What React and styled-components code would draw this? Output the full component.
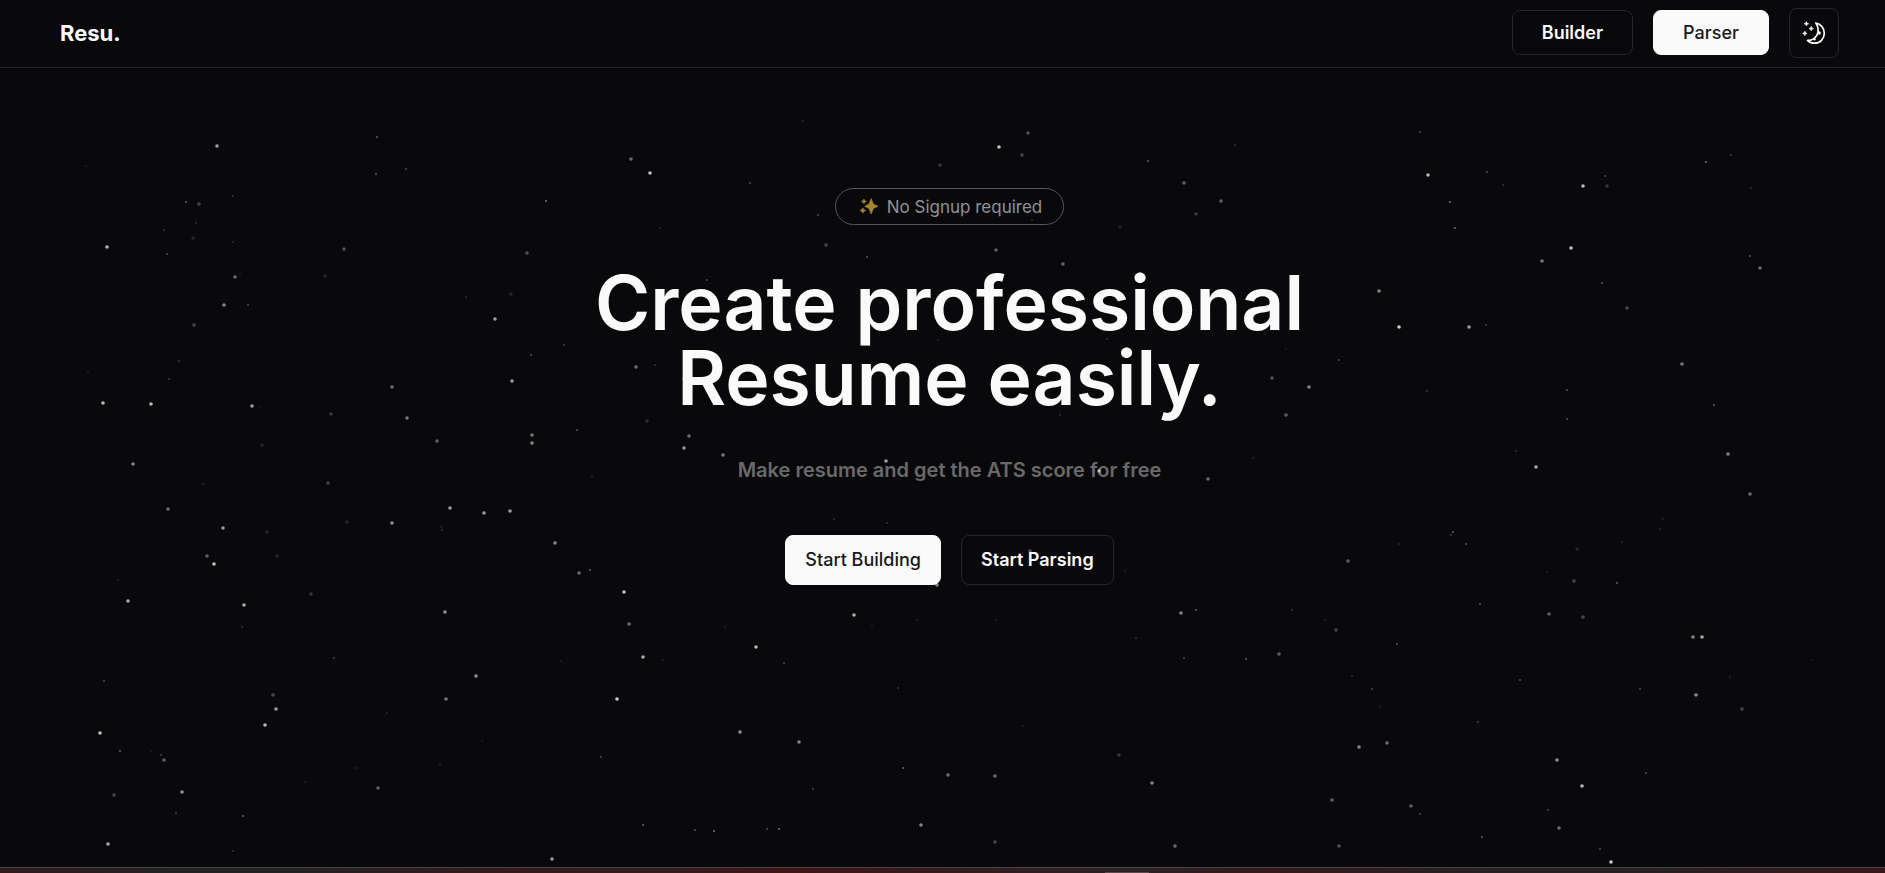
import React from "react";
import styled, { createGlobalStyle } from "styled-components";

const GlobalStyle = createGlobalStyle`
  *, *::before, *::after { box-sizing: border-box; }
  body {
    margin: 0;
    background: #09090b;
    color: #fafafa;
    font-family: Inter, "Liberation Sans", sans-serif;
  }
`;

const Page = styled.div`
  position: relative;
  display: flex;
  flex-direction: column;
  min-height: 100vh;
`;

const Sky = styled.svg`
  position: absolute;
  inset: 0;
  width: 100%;
  height: 100%;
  pointer-events: none;
  fill: #fff;
`;

const Header = styled.header`
  display: flex;
  align-items: center;
  justify-content: space-between;
  height: 68px;
  padding: 0 46px 2px 60px;
  border-bottom: 1px solid #222225;
`;

const Logo = styled.a`
  color: #fafafa;
  font-size: 22px;
  font-weight: 700;
  line-height: 28px;
  text-decoration: none;
`;

const Nav = styled.nav`
  display: flex;
  align-items: center;
  gap: 20px;
`;

const Button = styled.button`
  display: inline-flex;
  align-items: center;
  justify-content: center;
  height: ${(p) => (p.$large ? 50 : 45)}px;
  padding: 0 ${(p) => (p.$large ? 19 : 29)}px;
  border: 1px solid ${(p) => (p.$solid ? "#fafafa" : "#27272a")};
  border-radius: 8px;
  background: ${(p) => (p.$solid ? "#fafafa" : "#09090b")};
  color: ${(p) => (p.$solid ? "#18181b" : "#fafafa")};
  font-family: inherit;
  font-size: 18px;
  font-weight: ${(p) => (p.$solid ? 500 : 600)};
  line-height: 24px;
  white-space: nowrap;
  cursor: pointer;
`;

const IconButton = styled(Button)`
  width: 50px;
  height: 50px;
  padding: 0;
`;

const Hero = styled.main`
  display: flex;
  flex: 1;
  flex-direction: column;
  align-items: center;
  padding: 120px 0 60px 14px;
  text-align: center;
`;

const Pill = styled.div`
  display: flex;
  align-items: center;
  gap: 8px;
  height: 37px;
  padding: 0 21px 0 24px;
  border: 1px solid #57575a;
  border-radius: 20px;
  color: #929298;
  font-size: 17px;
  line-height: 24px;
`;

const Title = styled.h1`
  margin: 40px 0 0;
  font-size: 75px;
  font-weight: 600;
  line-height: 75px;
`;

const Subtitle = styled.p`
  margin: 40px 0 0;
  color: #69696b;
  font-size: 20px;
  font-weight: 600;
  line-height: 30px;
`;

const Actions = styled.div`
  display: flex;
  gap: 20px;
  margin-top: 50px;
`;

const Preview = styled.section`
  display: flex;
  align-items: flex-end;
  height: 6px;
  padding-left: 58.6%;
  border-top: 1px solid #464648;
  background: linear-gradient(
    90deg,
    #2f191b 0%, #232122 9%, #252122 17%, #35191b 27%, #331c1e 35%,
    #3f1415 42%, #331b1d 51%, #2a2223 60%, #35181a 67%, #252122 79%,
    #252122 86%, #371719 100%
  );
`;

const PreviewTab = styled.span`
  width: 44px;
  height: 1px;
  background: #5a4a4b;
`;

const STAR_RADIUS = { big: 1.8, small: 0.9 };

// Each star is [x, y, opacity in percent].
const BIG_STARS = [
  [217, 146, 60], [199, 204, 25], [193, 238, 12], [107, 247, 70], [344, 249, 30], [527, 253, 30],
  [235, 277, 40], [325, 276, 12], [224, 305, 50], [194, 325, 25], [103, 403, 70], [151, 404, 70],
  [252, 406, 60], [331, 414, 20], [262, 445, 12], [392, 387, 40], [407, 418, 45], [437, 441, 35],
  [133, 464, 50], [168, 509, 40], [328, 483, 25], [223, 528, 60], [267, 532, 12], [347, 522, 12],
  [392, 523, 55], [277, 556, 12], [207, 556, 35], [214, 564, 75], [511, 294, 12], [495, 319, 60],
  [512, 381, 60], [532, 435, 45], [532, 443, 50], [450, 508, 60], [484, 513, 60], [510, 511, 60],
  [555, 543, 50], [579, 573, 40], [128, 601, 65], [244, 605, 65], [311, 594, 20], [273, 695, 25],
  [276, 709, 60], [265, 725, 70], [100, 733, 75], [164, 760, 35], [114, 795, 25], [182, 792, 55],
  [108, 844, 65], [445, 612, 55], [476, 676, 55], [446, 699, 45], [378, 788, 35], [617, 699, 80],
  [624, 592, 75], [629, 624, 40], [552, 859, 60], [643, 657, 65], [756, 647, 70], [854, 615, 65],
  [740, 732, 55], [799, 742, 50], [948, 775, 40], [995, 776, 40], [921, 825, 50], [995, 842, 25],
  [1119, 755, 20], [1152, 783, 50], [1175, 846, 40], [1181, 613, 50], [937, 585, 50],
  [1336, 630, 25], [1279, 654, 35], [1549, 614, 35], [1583, 617, 25], [1574, 581, 25],
  [1693, 637, 50], [1702, 637, 65], [1696, 695, 55], [1742, 709, 25], [1359, 747, 50],
  [1387, 743, 40], [1557, 760, 55], [1582, 786, 70], [1332, 800, 35], [1411, 806, 35],
  [1559, 828, 40], [1339, 846, 30], [1611, 862, 80], [1379, 291, 50], [1627, 308, 25],
  [1399, 327, 80], [1469, 327, 60], [1272, 378, 30], [1309, 387, 50], [1286, 415, 35],
  [1682, 364, 45], [1536, 467, 65], [1728, 454, 50], [1750, 494, 40], [1577, 549, 12],
  [1348, 561, 35], [1428, 175, 70], [1583, 186, 70], [1607, 186, 20], [1571, 248, 75],
  [1542, 261, 45], [1760, 268, 40], [826, 245, 25], [996, 250, 35], [1063, 264, 40],
  [636, 367, 40], [647, 421, 15], [684, 379, 50], [723, 455, 45], [886, 461, 60], [1099, 471, 60],
  [1030, 551, 30], [631, 159, 40], [650, 173, 75], [999, 147, 75], [1022, 155, 25],
  [1028, 133, 30], [940, 165, 20], [1120, 227, 12], [1184, 183, 35], [1221, 201, 35],
  [1196, 214, 20], [689, 436, 40], [684, 448, 60], [1208, 479, 40],
];

const SMALL_STARS = [
  [377, 137, 40], [376, 174, 40], [406, 169, 30], [233, 196, 20], [186, 202, 40], [196, 223, 20],
  [164, 230, 20], [233, 242, 20], [167, 254, 30], [546, 201, 50], [86, 166, 10], [240, 274, 10],
  [248, 305, 30], [179, 361, 25], [169, 379, 25], [88, 372, 10], [260, 407, 10], [203, 484, 20],
  [466, 297, 15], [564, 345, 25], [531, 355, 35], [577, 430, 35], [592, 477, 15], [441, 527, 15],
  [442, 530, 20], [590, 570, 40], [118, 580, 15], [242, 627, 20], [334, 658, 30], [104, 681, 35],
  [120, 751, 40], [151, 751, 10], [161, 755, 25], [176, 813, 25], [243, 816, 45], [233, 851, 20],
  [387, 713, 12], [482, 741, 10], [440, 765, 15], [355, 768, 12], [305, 782, 12], [561, 661, 12],
  [601, 757, 30], [663, 660, 15], [784, 663, 30], [725, 627, 12], [872, 626, 10], [917, 620, 15],
  [996, 620, 12], [898, 688, 20], [903, 768, 40], [813, 789, 30], [643, 825, 40], [695, 830, 35],
  [714, 831, 50], [767, 829, 30], [779, 829, 50], [1023, 726, 10], [1196, 610, 40],
  [1136, 638, 20], [1184, 658, 30], [1246, 659, 40], [1292, 610, 20], [1325, 620, 12],
  [1397, 644, 35], [1480, 604, 35], [1617, 583, 40], [1352, 676, 20], [1372, 689, 30],
  [1380, 707, 15], [1520, 680, 35], [1640, 689, 30], [1730, 677, 15], [1812, 660, 10],
  [1478, 722, 30], [1646, 773, 30], [1420, 814, 30], [1548, 810, 30], [1482, 837, 40],
  [1600, 849, 35], [1486, 325, 25], [1286, 349, 10], [1339, 360, 30], [1427, 391, 25],
  [1567, 390, 35], [1567, 419, 35], [1714, 405, 40], [1516, 451, 20], [1663, 519, 15],
  [1660, 529, 15], [1622, 542, 15], [1453, 532, 40], [1451, 535, 25], [1466, 544, 35],
  [1399, 544, 15], [1547, 572, 10], [1420, 132, 30], [1487, 172, 30], [1503, 185, 20],
  [1450, 202, 45], [1455, 228, 45], [1605, 176, 30], [1706, 162, 45], [1731, 155, 25],
  [1751, 188, 20], [1602, 283, 35], [1750, 256, 35], [867, 257, 35], [707, 280, 30],
  [655, 365, 20], [938, 340, 15], [1107, 339, 20], [1060, 415, 20], [834, 519, 20],
  [887, 523, 20], [1125, 571, 12], [750, 183, 30], [818, 215, 30], [803, 121, 15],
  [660, 228, 15], [1148, 161, 40], [1235, 145, 20], [1253, 458, 15], [1032, 220, 20],
];

function Stars({ stars, size }) {
  return stars.map(([x, y, opacity]) => (
    <circle
      key={`${x}-${y}`}
      cx={x}
      cy={y}
      r={STAR_RADIUS[size]}
      opacity={opacity / 100}
    />
  ));
}

function MoonIcon() {
  return (
    <svg width="24" height="24" viewBox="0 0 24 24" fill="none" aria-hidden="true">
      <path
        d="M13.800 2C19 3 22.300 7.200 22.300 12.200c0 5.600-4.300 10-9.600 10-2.900 0-5.500-.9-7.200-2.800C10.500 19.600 15 16.500 15.900 11.500 16.500 8 15.700 4.700 13.800 2Z"
        stroke="#fafafa"
        strokeWidth="1.700"
        strokeLinejoin="round"
      />
      <circle cx="17.200" cy="12" r="1.700" fill="#fafafa" />
      <circle cx="12.500" cy="18.200" r="1.200" fill="#fafafa" />
      <path
        d="M4.400.6l.7 1.500 1.600.7-1.600.7-.7 1.500-.7-1.500-1.600-.7 1.600-.7zM9.200 5.300l.7 1.600 1.600.7-1.600.7-.7 1.600-.7-1.600-1.600-.7 1.600-.7zM2.800 10.100l.7 1.600 1.600.7-1.600.7-.7 1.600-.7-1.600-1.600-.7 1.600-.7z"
        fill="#fafafa"
        stroke="#fafafa"
        strokeWidth=".6"
      />
    </svg>
  );
}

function SparklesIcon() {
  return (
    <svg
      width="19"
      height="17"
      viewBox="0 0 19 17"
      fill="#a8842f"
      stroke="#a8842f"
      strokeWidth=".6"
      strokeLinejoin="round"
      aria-hidden="true"
    >
      <path d="M11.200.6L13.400 6l4.600 2.300-4.600 2.300-2.200 5.400-2.200-5.400-4.400-2.300L9 6z" />
      <path d="M3.900 1l.8 1.600 1.700.8-1.700.8-.8 1.600-.8-1.600-1.700-.8 1.700-.8z" />
      <path d="M2.900 9.800l.9 1.800 2 .9-2 .9-.9 1.800-.9-1.800-2-.9 2-.9z" />
    </svg>
  );
}

export default function App() {
  return (
    <>
      <GlobalStyle />
      <Page>
        <Header>
          <Logo href="#">Resu.</Logo>
          <Nav>
            <Button type="button">Builder</Button>
            <Button type="button" $solid>Parser</Button>
            <IconButton type="button" aria-label="Toggle theme">
              <MoonIcon />
            </IconButton>
          </Nav>
        </Header>
        <Hero>
          <Pill>
            <SparklesIcon />
            No Signup required
          </Pill>
          <Title>
            Create professional
            <br />
            Resume easily.
          </Title>
          <Subtitle>Make resume and get the ATS score for free</Subtitle>
          <Actions>
            <Button type="button" $large $solid>Start Building</Button>
            <Button type="button" $large>Start Parsing</Button>
          </Actions>
        </Hero>
        <Preview>
          <PreviewTab />
        </Preview>
        <Sky viewBox="0 0 1885 873" preserveAspectRatio="xMidYMin slice" aria-hidden="true">
          <Stars stars={BIG_STARS} size="big" />
          <Stars stars={SMALL_STARS} size="small" />
        </Sky>
      </Page>
    </>
  );
}
